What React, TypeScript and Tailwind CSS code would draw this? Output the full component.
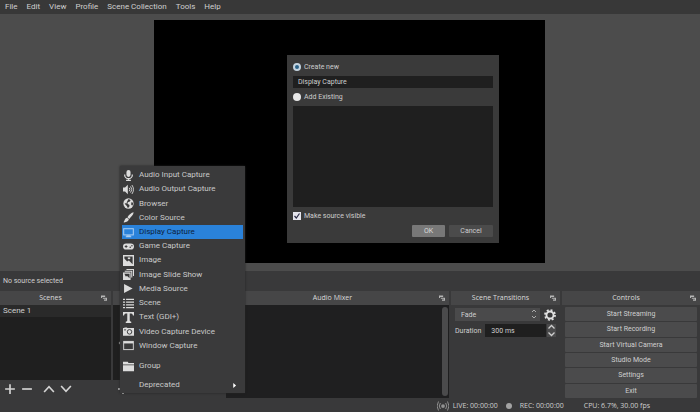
import React, { useState } from "react";
import type { ReactNode } from "react";

const menus = ["File", "Edit", "View", "Profile", "Scene Collection", "Tools", "Help"];

const fill = { fill: "currentColor" };
const line = { fill: "none", stroke: "currentColor" };

function Icon({ children, size = "size-[11px]" }: { children: ReactNode; size?: string }) {
  return (
    <svg viewBox="0 0 16 16" className={`${size} shrink-0`} aria-hidden="true">
      {children}
    </svg>
  );
}

const sources: { label: string; icon: ReactNode }[] = [
  {
    label: "Audio Input Capture",
    icon: (
      <>
        <rect x="5" y="0" width="6" height="10" rx="3" {...fill} />
        <path d="M2.5 6.5v1a5.5 5 0 0 0 11 0v-1M8 12.5V15M4.5 15.2h7" {...line} strokeWidth="1.8" />
      </>
    ),
  },
  {
    label: "Audio Output Capture",
    icon: (
      <>
        <path d="M0 5h3l4-4v14l-4-4H0z" {...fill} />
        <path d="M9 5.5q2 2.500 0 5M11 3.500q3.500 4.500 0 9M13 1.500q4.500 6.500 0 13" {...line} strokeWidth="1.3" />
      </>
    ),
  },
  {
    label: "Browser",
    icon: (
      <>
        <circle cx="8" cy="8" r="7.500" {...fill} />
        <path d="M8 1.500l3 1.500-1 2-3 1-.5 2.500 3 1.500-.5 3-2 1.500-1.500-3-3-3 .5-1 2 .5L6 5zM12 6l3 1-1 4-2-1z" fill="#3a3a3b" />
      </>
    ),
  },
  {
    label: "Color Source",
    icon: (
      <>
        <path d="M15.500.5C12 1 9 4 6.500 7.500l2.500 2.500C12 7 15 4.500 15.500.5z" {...fill} />
        <path d="M6 8.200l2.500 2.500C8 14 4 15.500.5 15c2-1.500 1.500-6 5.500-6.800z" {...fill} />
      </>
    ),
  },
  {
    label: "Display Capture",
    icon: (
      <>
        <rect x="1" y="2.500" width="14" height="9" {...line} strokeWidth="1.500" />
        <path d="M5 12h6v1.500h1V15H4v-1.500h1z" {...fill} />
      </>
    ),
  },
  {
    label: "Game Capture",
    icon: (
      <>
        <rect x="0" y="3.500" width="16" height="9" rx="4.500" {...fill} />
        <path d="M2.500 8h4M4.500 6v4" stroke="#3a3a3b" strokeWidth="1.400" />
        <circle cx="10.500" cy="9" r="1.100" fill="#3a3a3b" />
        <circle cx="13" cy="7" r="1.100" fill="#3a3a3b" />
      </>
    ),
  },
  {
    label: "Image",
    icon: (
      <>
        <path d="M0 0h16v16H0z" {...fill} />
        <path d="M2 2h12v11.500L8.500 8 6 9.500 2 5z" fill="#3a3a3b" />
        <path d="M7 3.500h3.500V6H7z" {...fill} />
      </>
    ),
  },
  {
    label: "Image Slide Show",
    icon: (
      <>
        <path d="M5 0h11v10h-1.500V1.500H5zM2.500 2.500h11v10H12V4H2.500z" {...fill} />
        <path d="M0 5h11v11H0z" {...fill} />
        <path d="M2 7h7.500v6.500L6 10l-2 1z" fill="#3a3a3b" />
      </>
    ),
  },
  { label: "Media Source", icon: <path d="M1.500 1.500L14 8 1.500 14.500z" {...fill} /> },
  {
    label: "Scene",
    icon: <path d="M0 1h3v2H0zM4.500 1H16v2H4.500zM0 5h3v2H0zM4.500 5H16v2H4.500zM0 9h3v2H0zM4.500 9H16v2H4.500zM0 13h3v2H0zM4.500 13H16v2H4.500z" {...fill} />,
  },
  {
    label: "Text (GDI+)",
    icon: <path d="M0 0h16v5h-1.500Q14 2 12 2H9.800v10.500q0 1.500 2.200 1.500v2H4v-2q2.200 0 2.200-1.500V2H4Q2 2 1.500 5H0z" {...fill} />,
  },
  {
    label: "Video Capture Device",
    icon: (
      <>
        <path d="M0 3h2V2h4v1h10v11H0z" {...fill} />
        <circle cx="9.500" cy="8.500" r="3.300" fill="none" stroke="#3a3a3b" strokeWidth="1.400" />
        <path d="M1.500 5h3v1.300h-3z" fill="#3a3a3b" />
      </>
    ),
  },
  {
    label: "Window Capture",
    icon: (
      <>
        <rect x="1" y="2" width="14" height="12" {...line} strokeWidth="1.300" />
        <path d="M1 2h14v3H1z" {...fill} />
      </>
    ),
  },
];

function SourceMenu() {
  const row = "flex w-full items-center gap-1 pr-1.5 pl-px text-left";
  return (
    <div
      role="menu"
      className="absolute bottom-[19px] left-[120px] flex w-[125px] flex-col bg-[#3a3a3b] px-0.5 pt-0.5 leading-none text-[#c9c9c9] shadow-[0_0_2px_#222]"
    >
      <div className="grid h-[185px] auto-rows-fr">
        {sources.map((s) => (
          <button
            key={s.label}
            role="menuitem"
            className={`${row} ${s.label === "Display Capture" ? "bg-[#2a82da] text-[#0c2340]" : ""}`}
          >
            <span className={`flex w-3 ${s.label === "Display Capture" ? "text-[#a9cdf2]" : "text-[#dcdcdc]"}`}>
              <Icon>{s.icon}</Icon>
            </span>
            {s.label}
          </button>
        ))}
      </div>
      <button role="menuitem" className={`${row} mt-1.5 h-3.5`}>
        <span className="flex w-3 text-[#dcdcdc]">
          <Icon>
            <path d="M0 1h7l1 2h8v2H0zM0 6h16v9H0z" {...fill} />
          </Icon>
        </span>
        Group
      </button>
      <button role="menuitem" aria-haspopup="menu" className={`${row} mt-1 h-4`}>
        <span className="w-3" />
        <span className="flex-1">Deprecated</span>
        <Icon size="size-[5px]">
          <path d="M4 0l9 8-9 8z" fill="#fff" />
        </Icon>
      </button>
    </div>
  );
}

function SourceDialog() {
  const [mode, setMode] = useState("new");
  const radio =
    "size-2 appearance-none rounded-full bg-[#e8e8e8] checked:border-2 checked:border-[#c3d3df] checked:bg-[#2b6287]";
  return (
    <form
      role="dialog"
      aria-label="Create source"
      onSubmit={(e) => e.preventDefault()}
      className="absolute top-[35px] left-[133px] flex h-[188px] w-[212px] flex-col bg-[#3a3a3a] px-1.5 pt-1.5 pb-1.5 text-[7px] leading-3 text-[#cdcdcd]"
    >
      <label className="flex h-3 items-center gap-[3px]">
        <input type="radio" name="mode" className={radio} checked={mode === "new"} onChange={() => setMode("new")} />
        Create new
      </label>
      <input
        aria-label="Source name"
        defaultValue="Display Capture"
        className="mt-[3px] h-3 w-full bg-[#1f1f1f] px-[5px] leading-3"
      />
      <label className="mt-[3px] flex h-3 items-center gap-[3px]">
        <input type="radio" name="mode" className={radio} checked={mode === "old"} onChange={() => setMode("old")} />
        Add Existing
      </label>
      <div role="listbox" aria-label="Existing sources" className="mt-[3px] flex-1 bg-[#1f1f1f]" />
      <label className="mt-[3px] flex h-3 items-center gap-[3px]">
        <span className="relative flex size-2">
          <input type="checkbox" defaultChecked className="peer size-2 appearance-none bg-[#e4e4ec]" />
          <svg viewBox="0 0 8 8" className="pointer-events-none absolute inset-0 hidden peer-checked:block" aria-hidden="true">
            <path d="M1.500 4l1.800 2L6.500 1.500" fill="none" stroke="#2b2b45" strokeWidth="1.200" />
          </svg>
        </span>
        Make source visible
      </label>
      <div className="mt-[3px] flex justify-end gap-1">
        <button className="h-3 w-[33px] rounded-[1px] bg-[#787878] text-[#dadada]">OK</button>
        <button type="button" className="h-3 w-11 rounded-[1px] bg-[#4b4b4b]">
          Cancel
        </button>
      </div>
    </form>
  );
}

function Dock({ title, label, className, children }: { title?: string; label: string; className: string; children: ReactNode }) {
  return (
    <section aria-label={label} className={`flex min-w-0 flex-col ${className}`}>
      <header className="flex h-3.5 shrink-0 items-center bg-[#464647] pr-1">
        <h2 className="flex-1 text-center font-['Open_Sans','Noto_Sans',sans-serif] text-[7px] text-[#dadada]">{title}</h2>
        <button aria-label={`Float ${label}`}>
          <Icon size="size-1.5">
            <path d="M0 1h11v4H0zM0 5h3v3H0zM5 7h11v3H5zM13 10h3v5H8v-3h5z" fill="#b5b5b5" />
          </Icon>
        </button>
      </header>
      {children}
    </section>
  );
}

function ToolButton({ label, d }: { label: string; d: string }) {
  return (
    <button aria-label={label}>
      <Icon size="size-3">
        <path d={d} fill="none" stroke="#d4d4d4" strokeWidth="2.200" />
      </Icon>
    </button>
  );
}

const PLUS = "M1.500 8h13M8 1.500v13";
const MINUS = "M1.500 8h13";
const UP = "M1.500 12l6.500-7 6.500 7";
const DOWN = "M1.500 4l6.500 7 6.500-7";

export default function App() {
  return (
    <div className="relative flex min-h-screen flex-col overflow-hidden bg-[#39393a] font-[Roboto,'Noto_Sans',sans-serif] text-[8px] leading-3 text-[#cfcfcf]">
      <nav className="flex h-3.5 items-center gap-[9px] bg-[#383838] px-[5px]">
        {menus.map((m) => (
          <button key={m}>{m}</button>
        ))}
      </nav>

      <main className="flex h-[257px] grow justify-center bg-[#4c4c4c] pt-1.5 pr-px pb-2">
        <div className="relative aspect-[391/243] h-full bg-black">
          <SourceDialog />
        </div>
      </main>

      <div className="flex h-5 items-center px-[3px] text-[7px]">No source selected</div>

      <div className="flex h-[107px] gap-0.5">
        <Dock title="Scenes" label="Scenes" className="w-[111px]">
          <ul className="flex-1 bg-[#1f1f1f]">
            <li className="h-3 bg-[#2a2a2a] px-[3px]">Scene 1</li>
          </ul>
          <div className="flex h-[18px] items-center gap-[5px] px-1">
            <ToolButton label="Add scene" d={PLUS} />
            <ToolButton label="Remove scene" d={MINUS} />
            <span className="w-0" />
            <ToolButton label="Move scene up" d={UP} />
            <ToolButton label="Move scene down" d={DOWN} />
          </div>
        </Dock>
        <Dock label="Sources" className="w-[111px]">
          <div className="flex flex-1 items-center bg-[#1f1f1f] pl-1">
            <Icon size="size-1">
              <path d="M14 1Q2 8 14 15" {...line} strokeWidth="3" />
            </Icon>
          </div>
          <div className="flex h-[18px] items-center px-1">
            <ToolButton label="Add source" d={PLUS} />
          </div>
        </Dock>
        <Dock title="Audio Mixer" label="Audio Mixer" className="flex-1">
          <div className="flex flex-1 justify-end bg-[#1f1f20] px-px py-0.5">
            <div className="w-1.5 rounded-full bg-[#4b4b4c]" />
          </div>
        </Dock>
        <Dock title="Scene Transitions" label="Scene Transitions" className="w-[109px]">
          <div className="flex flex-col gap-[3px] px-1 pt-[3px] text-[7px]">
            <div className="flex items-center gap-1">
              <div className="relative flex flex-1">
                <select aria-label="Transition" className="h-[13px] w-full appearance-none bg-[#4a4a4b] pl-1.5 leading-3">
                  <option>Fade</option>
                </select>
                <svg viewBox="0 0 8 12" className="pointer-events-none absolute top-0 right-0.5 h-3 w-2" aria-hidden="true">
                  <path d="M2 4l2-2 2 2M2 8l2 2 2-2" fill="none" stroke="#aaa" />
                </svg>
              </div>
              <button aria-label="Transition settings" className="text-[#e2e2e2]">
                <Icon size="size-3">
                  <circle cx="8" cy="8" r="4.700" {...line} strokeWidth="2.500" />
                  <circle cx="8" cy="8" r="6.700" {...line} strokeWidth="2.300" strokeDasharray="2.630 2.630" />
                </Icon>
              </button>
            </div>
            <div className="flex items-center gap-1">
              <label htmlFor="duration">Duration</label>
              <div className="flex min-w-0 flex-1 gap-px">
                <input id="duration" defaultValue="300 ms" className="h-[13px] w-full min-w-0 bg-[#1f1f1f] px-1.5" />
                <div className="flex flex-col gap-px bg-[#4a4a4b]">
                  <button aria-label="Increase" className="flex h-1.5 w-[9px] justify-center">
                    <svg viewBox="0 0 9 6" className="h-1.5 w-[9px]"><path d="M1.500 4.500l3-3 3 3" {...line} strokeWidth="1.300" /></svg>
                  </button>
                  <button aria-label="Decrease" className="flex h-1.5 w-[9px] justify-center">
                    <svg viewBox="0 0 9 6" className="h-1.5 w-[9px]"><path d="M1.500 1.500l3 3 3-3" {...line} strokeWidth="1.300" /></svg>
                  </button>
                </div>
              </div>
            </div>
          </div>
        </Dock>
        <Dock title="Controls" label="Controls" className="w-[138px]">
          <div className="grid flex-1 auto-rows-fr gap-px px-[3px] pt-0.5">
            {["Start Streaming", "Start Recording", "Start Virtual Camera", "Studio Mode", "Settings", "Exit"].map((b) => (
              <button key={b} className="rounded-[1px] bg-[#4b4b4c] text-[7px]">
                {b}
              </button>
            ))}
          </div>
        </Dock>
      </div>

      <footer className="flex h-3.5 items-center justify-end pt-0.5 pr-[50px] font-['Open_Sans','Noto_Sans',sans-serif] text-[7px]">
        <span className="mr-1 flex text-[#929292]">
          <Icon size="size-3">
            <circle cx="8" cy="8" r="2.500" {...fill} />
            <path d="M4.500 4Q1.500 8 4.500 12M11.500 4Q14.500 8 11.500 12M2 2Q-2 8 2 14M14 2Q18 8 14 14" {...line} strokeWidth="1.300" />
          </Icon>
        </span>
        <span>LIVE: 00:00:00</span>
        <span className="mx-2 size-1.5 rounded-full bg-[#a3a3a3]" />
        <span>REC: 00:00:00</span>
        <span className="ml-5">CPU: 6.7%, 30.00 fps</span>
      </footer>

      <SourceMenu />
    </div>
  );
}
